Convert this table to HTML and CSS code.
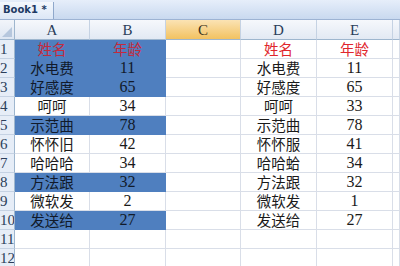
FILE: index.html
```html
<!DOCTYPE html>
<html>
<head>
<meta charset="utf-8">
<link rel="stylesheet" href="styles.css">
</head>
<body>
<div class="tabbar"><div class="tab">Book1 *</div></div>
<div class="sheet">
  <div class="corner"><span class="tri"></span></div>
  <div class="ch">A</div><div class="ch">B</div><div class="ch ch-on">C</div><div class="ch">D</div><div class="ch">E</div><div class="ch"></div>

  <div class="rh">1</div>
  <div class="c sel red">姓名</div><div class="c sel red">年龄</div><div class="c"></div><div class="c red">姓名</div><div class="c red">年龄</div><div class="c"></div>

  <div class="rh">2</div>
  <div class="c sel">水电费</div><div class="c sel num">11</div><div class="c"></div><div class="c">水电费</div><div class="c num">11</div><div class="c"></div>

  <div class="rh">3</div>
  <div class="c sel">好感度</div><div class="c sel num">65</div><div class="c"></div><div class="c">好感度</div><div class="c num">65</div><div class="c"></div>

  <div class="rh">4</div>
  <div class="c">呵呵</div><div class="c num">34</div><div class="c"></div><div class="c">呵呵</div><div class="c num">33</div><div class="c"></div>

  <div class="rh">5</div>
  <div class="c sel">示范曲</div><div class="c sel num">78</div><div class="c"></div><div class="c">示范曲</div><div class="c num">78</div><div class="c"></div>

  <div class="rh">6</div>
  <div class="c">怀怀旧</div><div class="c num">42</div><div class="c"></div><div class="c">怀怀服</div><div class="c num">41</div><div class="c"></div>

  <div class="rh">7</div>
  <div class="c">哈哈哈</div><div class="c num">34</div><div class="c"></div><div class="c">哈哈蛤</div><div class="c num">34</div><div class="c"></div>

  <div class="rh">8</div>
  <div class="c sel">方法跟</div><div class="c sel num">32</div><div class="c"></div><div class="c">方法跟</div><div class="c num">32</div><div class="c"></div>

  <div class="rh">9</div>
  <div class="c">微软发</div><div class="c num">2</div><div class="c"></div><div class="c">微软发</div><div class="c num">1</div><div class="c"></div>

  <div class="rh">10</div>
  <div class="c sel">发送给</div><div class="c sel num">27</div><div class="c"></div><div class="c">发送给</div><div class="c num">27</div><div class="c"></div>

  <div class="rh">11</div>
  <div class="c"></div><div class="c"></div><div class="c"></div><div class="c"></div><div class="c"></div><div class="c"></div>

  <div class="rh">12</div>
  <div class="c"></div><div class="c"></div><div class="c"></div><div class="c"></div><div class="c"></div><div class="c"></div>
</div>
</body>
</html>
```
FILE: styles.css
```css
html, body {
  margin: 0;
  padding: 0;
  width: 400px;
  height: 266px;
  overflow: hidden;
  background: #ffffff;
}
.tabbar {
  height: 20px;
  box-sizing: border-box;
  background: linear-gradient(#e6eefa, #c9d9ef);
  border-bottom: 1px solid #9db3d3;
  display: flex;
  align-items: flex-end;
}
.tab {
  height: 17px;
  box-sizing: border-box;
  padding: 0 6px 0 3px;
  background: linear-gradient(#f4f8fd, #dce7f6);
  border-right: 1px solid #8fa8cb;
  font-family: "DejaVu Sans", sans-serif;
  font-weight: bold;
  font-size: 10px;
  line-height: 16px;
  color: #1d3a63;
}
.sheet {
  display: grid;
  grid-template-columns: 15px 75px 76px 75px 76px 76px 1fr;
  grid-template-rows: 20px repeat(12, 19px);
}
.corner {
  position: relative;
  background: linear-gradient(#f2f5fa, #dde6f2);
  border-right: 1px solid #9eb6ce;
  border-bottom: 1px solid #9eb6ce;
  box-sizing: border-box;
}
.tri {
  position: absolute;
  right: 2px;
  bottom: 2px;
  width: 0;
  height: 0;
  border-left: 10px solid transparent;
  border-bottom: 10px solid #b6c7dd;
}
.ch {
  box-sizing: border-box;
  background: linear-gradient(#f6f8fc, #e2e9f3);
  border-right: 1px solid #c5d2e3;
  border-bottom: 1px solid #9eb6ce;
  font-family: "Liberation Serif", serif;
  font-size: 15px;
  color: #2b3e5a;
  text-align: center;
  line-height: 20px;
}
.ch-on {
  background: linear-gradient(#fbe3b4, #f2c261);
  color: #3a3220;
}
.rh {
  box-sizing: border-box;
  background: #e6edf7;
  border-right: 1px solid #9eb6ce;
  border-bottom: 1px solid #c5d2e3;
  font-family: "Liberation Serif", serif;
  font-size: 15px;
  color: #2b3e5a;
  text-align: right;
  padding-right: 9px;
  line-height: 19px;
  overflow: hidden;
  white-space: nowrap;
}
.c {
  box-sizing: border-box;
  border-right: 1px solid #d9dee8;
  border-bottom: 1px solid #d9dee8;
  font-family: "Noto Sans CJK SC", sans-serif;
  font-size: 14.5px;
  line-height: 18px;
  text-align: center;
  color: #1a1a1a;
  white-space: nowrap;
}
.num {
  font-family: "Liberation Serif", serif;
  font-size: 16px;
}
.sel {
  background: #4f7fbf;
  border-color: #4f7fbf;
  color: #111a2a;
}
.red {
  color: #e0262c;
}
.sel.red {
  color: #c42a3c;
}
```
